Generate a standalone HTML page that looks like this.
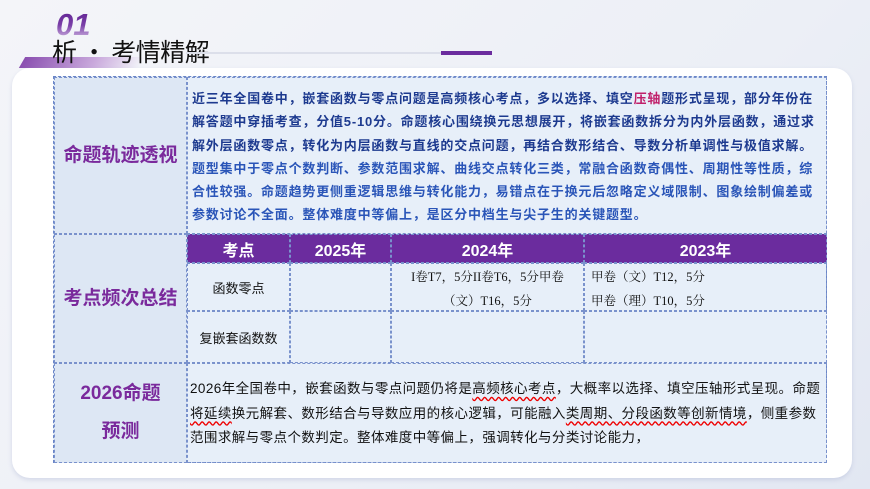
<!DOCTYPE html>
<html><head><meta charset="utf-8"><style>
*{margin:0;padding:0;box-sizing:border-box}
body{width:870px;height:489px;overflow:hidden;background:linear-gradient(135deg,#f4f5f9,#eceff6 60%,#e2e7f2);font-family:"Liberation Sans","Noto Sans CJK SC",sans-serif;position:relative}
.abs{position:absolute}
.card{left:12px;top:68px;width:840px;height:410px;background:#fff;border-radius:18px;box-shadow:0 2px 4px rgba(150,160,200,.3)}
.grid{left:53px;top:76px;width:774px;height:387px;background:#e7eff9;border:1px dashed #6a86c8}
.cell{position:absolute;border:1px dashed #7a92cc}
.lab{background:#dde7f4;color:#7a2a9c;font-weight:bold;font-size:19px;display:flex;align-items:center;justify-content:center;text-align:center;line-height:38px}
.t1{color:#1d3a8f;font-weight:bold;font-size:13px;letter-spacing:0.8px;line-height:23.3px;padding:9px 0 0 4px;white-space:nowrap}
.hd{background:#6b2c9e;color:#fff;font-weight:bold;font-size:16px;display:flex;align-items:center;justify-content:center}
.c{display:flex;align-items:center;justify-content:center;font-size:13px;color:#111}
.f{font-family:"Liberation Serif","Noto Serif CJK SC",serif;font-size:12.5px;color:#111;line-height:24px}
.t3{font-size:13.5px;color:#111;line-height:24.5px;padding:13px 0 0 2px;white-space:nowrap;letter-spacing:0.42px}
.w{text-decoration:underline wavy #e00;text-underline-offset:3px}
</style></head><body>
<div class="abs" style="left:22px;top:57px;width:120px;height:11px;background:linear-gradient(90deg,#8a4fb0,#c9a9dc 60%,rgba(255,255,255,0));transform:skewX(-30deg)"></div>
<div class="abs" style="left:56px;top:7px;font-size:31px;font-weight:bold;background:linear-gradient(#5a1c8c,#7a3fa8 50%,#e6d6ef);-webkit-background-clip:text;color:transparent;font-style:italic">01</div>
<div class="abs" style="left:52px;top:33px;font-size:25px;letter-spacing:-0.5px;color:#111;font-family:'Noto Sans CJK SC',sans-serif">析 • 考情精解</div>
<div class="abs" style="left:186px;top:52px;width:306px;height:2px;background:#dcdfea"></div>
<div class="abs" style="left:441px;top:51px;width:51px;height:4px;background:#6b2c9e"></div>
<div class="abs card"></div>
<div class="abs grid">
<div class="cell lab" style="left:0;top:0;width:133px;height:157px">命题轨迹透视</div>
<div class="cell t1" style="left:133px;top:0;width:640px;height:157px">近三年全国卷中，嵌套函数与零点问题是高频核心考点，多以选择、填空<span style="color:#c0206a">压轴</span>题形式呈现，部分年份在<br>解答题中穿插考查，分值5-10分。命题核心围绕换元思想展开，将嵌套函数拆分为内外层函数，通过求<br>解外层函数零点，转化为内层函数与直线的交点问题，再结合数形结合、导数分析单调性与极值求解。<br><span style="color:#2a55b8">题型集中于零点个数判断、参数范围求解、曲线交点转化三类，常融合函数奇偶性、周期性等性质，综<br>合性较强。命题趋势更侧重逻辑思维与转化能力，易错点在于换元后忽略定义域限制、图象绘制偏差或<br>参数讨论不全面。整体难度中等偏上，是区分中档生与尖子生的关键题型。</span></div>
<div class="cell lab" style="left:0;top:157px;width:133px;height:129px">考点频次总结</div>
<div class="cell hd" style="left:133px;top:157px;width:103px;height:29px">考点</div>
<div class="cell hd" style="left:236px;top:157px;width:101px;height:29px">2025年</div>
<div class="cell hd" style="left:337px;top:157px;width:193px;height:29px">2024年</div>
<div class="cell hd" style="left:530px;top:157px;width:243px;height:29px">2023年</div>
<div class="cell c" style="left:133px;top:186px;width:103px;height:48px">函数零点</div>
<div class="cell" style="left:236px;top:186px;width:101px;height:48px"></div>
<div class="cell f" style="left:337px;top:186px;width:193px;height:48px;text-align:center;padding-top:1px">I卷T7，5分II卷T6，5分甲卷<br>（文）T16，5分</div>
<div class="cell f" style="left:530px;top:186px;width:243px;height:48px;padding:1px 0 0 6px">甲卷（文）T12，5分<br>甲卷（理）T10，5分</div>
<div class="cell c" style="left:133px;top:234px;width:103px;height:52px">复嵌套函数数</div>
<div class="cell" style="left:236px;top:234px;width:101px;height:52px"></div>
<div class="cell" style="left:337px;top:234px;width:193px;height:52px"></div>
<div class="cell" style="left:530px;top:234px;width:243px;height:52px"></div>
<div class="cell lab" style="left:0;top:286px;width:133px;height:100px">2026命题<br>预测</div>
<div class="cell t3" style="left:133px;top:286px;width:640px;height:100px">2026年全国卷中，嵌套函数与零点问题仍将是<span class="w">高频核心考点</span>，大概率以选择、填空压轴形式呈现。命题<br><span class="w">将延续</span>换元解套、数形结合与导数应用的核心逻辑，可能融入<span class="w">类周期、分段函数等创新情境</span>，侧重参数<br>范围求解与零点个数判定。整体难度中等偏上，强调转化与分类讨论能力，</div>
</div>
</body></html>
